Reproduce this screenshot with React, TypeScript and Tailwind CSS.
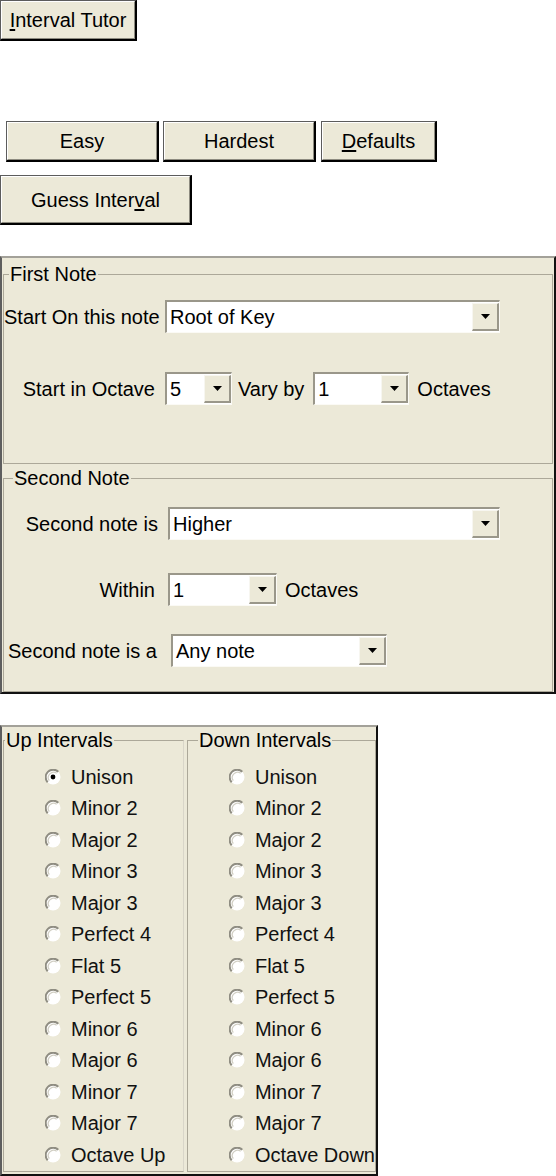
import React from 'react';

const face = 'bg-[#ece9d8]';

function Btn({ className, children }: { className: string; children: React.ReactNode }) {
  return (
    <div className={`flex border-t border-l border-t-[#5c5c5c] border-l-[#5c5c5c] border-r-2 border-b-2 border-r-black border-b-black ${face} ${className}`}>
      <div className="flex flex-1 items-center justify-center border-t border-l border-t-white border-l-white border-r border-b border-r-[#8d8b80] border-b-[#8d8b80] text-[20px] leading-none text-black">
        {children}
      </div>
    </div>
  );
}

function Arrow() {
  return (
    <svg width="9" height="5" viewBox="0 0 9 5">
      <path d="M0 0h9L4.5 5z" fill="#000" />
    </svg>
  );
}

function Combo({ value, className }: { value: string; className: string }) {
  return (
    <div className={`flex h-[33px] shrink-0 border-t-2 border-l-2 border-t-[#9a978a] border-l-[#9a978a] border-r border-b border-r-[#fbfaf5] border-b-[#fbfaf5] bg-white ${className}`}>
      <div className="flex flex-1 items-center pl-[3px] text-[20px] leading-none text-black">{value}</div>
      <div className={`my-[1px] flex w-[27px] items-center justify-center border-t border-l border-t-[#f7f6f0] border-l-[#f7f6f0] border-r-2 border-b-2 border-r-[#9a978a] border-b-[#9a978a] ${face}`}>
        <Arrow />
      </div>
    </div>
  );
}

function Radio({ checked }: { checked?: boolean }) {
  return (
    <svg width="16" height="16" viewBox="0 0 16 16" className="shrink-0">
      <circle cx="8" cy="8" r="7.5" fill="#fff" />
      <path d="M13.3 2.7 A7.5 7.5 0 0 0 2.7 13.3" fill="none" stroke="#8f8d82" strokeWidth="2" />
      <path d="M11.7 4.3 A5.3 5.3 0 0 0 4.3 11.7" fill="none" stroke="#d2d0c5" strokeWidth="1.3" />
      {checked && <circle cx="8" cy="8" r="2.4" fill="#000" />}
    </svg>
  );
}

const intervals = [
  'Unison',
  'Minor 2',
  'Major 2',
  'Minor 3',
  'Major 3',
  'Perfect 4',
  'Flat 5',
  'Perfect 5',
  'Minor 6',
  'Major 6',
  'Minor 7',
  'Major 7',
];

function IntervalList({ last, checkFirst }: { last: string; checkFirst?: boolean }) {
  const items = [...intervals, last];
  return (
    <div className="flex flex-col pt-[10px]">
      {items.map((name, i) => (
        <div key={name} className="flex h-[31.5px] items-center pl-[41px]">
          <Radio checked={checkFirst && i === 0} />
          <span className="ml-[10px] whitespace-nowrap text-[20px] leading-none text-[#111]">{name}</span>
        </div>
      ))}
    </div>
  );
}

export default function App() {
  return (
    <div className="min-h-screen bg-white font-['Liberation_Sans',Arial,sans-serif] text-black">
      {/* top button */}
      <Btn className="h-[41px] w-[137px]">
        <span>
          <u className="underline-offset-2">I</u>nterval Tutor
        </span>
      </Btn>

      {/* difficulty row */}
      <div className="mt-[80px] flex pl-[6px]">
        <Btn className="h-[41px] w-[153px]">Easy</Btn>
        <Btn className="ml-[4px] h-[41px] w-[153px]">Hardest</Btn>
        <Btn className="ml-[5px] h-[41px] w-[116px]">
          <span>
            <u className="underline-offset-2">D</u>efaults
          </span>
        </Btn>
      </div>

      <Btn className="mt-[13px] h-[50px] w-[192px]">
        <span>
          Guess Inter<u className="underline-offset-2">v</u>al
        </span>
      </Btn>

      {/* note settings panel */}
      <div className={`mt-[31px] flex h-[438px] w-[556px] flex-col border-t-2 border-l-2 border-t-[#a3a199] border-l-[#5e5e5e] border-r-2 border-b-2 border-r-[#111] border-b-[#111] px-[1px] ${face}`}>
        <fieldset className="mt-[5px] h-[201px] border border-[#aca899]">
          <legend className="ml-[5px] px-[1px] text-[20px] leading-[22px]">First Note</legend>
          <div className="mt-[15px] flex items-center">
            <div className="w-[161px] whitespace-nowrap text-[20px] leading-none">Start On this note</div>
            <Combo value="Root of Key" className="w-[335px]" />
          </div>
          <div className="mt-[39px] flex items-center">
            <div className="w-[161px] pr-[10px] text-right text-[20px] leading-none">Start in Octave</div>
            <Combo value="5" className="w-[67px]" />
            <span className="ml-[6px] text-[20px] leading-none">Vary by</span>
            <Combo value="1" className="ml-[9px] w-[96px]" />
            <span className="ml-[8px] text-[20px] leading-none">Octaves</span>
          </div>
        </fieldset>

        <fieldset className="mt-[3px] h-[225px] border border-[#aca899]">
          <legend className="ml-[9px] px-[1px] text-[20px] leading-[22px]">Second Note</legend>
          <div className="mt-[18px] flex items-center">
            <div className="w-[164px] pr-[10px] text-right text-[20px] leading-none">Second note is</div>
            <Combo value="Higher" className="w-[332px]" />
          </div>
          <div className="mt-[33px] flex items-center">
            <div className="w-[164px] pr-[13px] text-right text-[20px] leading-none">Within</div>
            <Combo value="1" className="w-[109px]" />
            <span className="ml-[8px] text-[20px] leading-none">Octaves</span>
          </div>
          <div className="mt-[28px] flex items-center">
            <div className="w-[167px] whitespace-nowrap pr-[14px] text-right text-[20px] leading-none">Second note is a</div>
            <Combo value="Any note" className="w-[216px]" />
          </div>
        </fieldset>
      </div>

      {/* interval choices panel */}
      <div className={`mt-[31px] flex h-[451px] w-[378px] border-t-2 border-l-2 border-t-[#a3a199] border-l-[#5e5e5e] border-r-2 border-b-2 border-r-[#111] border-b-[#111] pt-[2px] pb-[2px] pl-[1px] ${face}`}>
        <fieldset className="w-[182px] border border-[#aca899] border-r-[#d9d6c9]">
          <legend className="ml-[1px] px-[1px] text-[20px] leading-[22px]">Up Intervals</legend>
          <IntervalList last="Octave Up" checkFirst />
        </fieldset>
        <fieldset className="ml-[3px] w-[186px] border border-[#aca899]">
          <legend className="ml-[10px] px-[1px] text-[20px] leading-[22px]">Down Intervals</legend>
          <IntervalList last="Octave Down" />
        </fieldset>
      </div>
    </div>
  );
}
